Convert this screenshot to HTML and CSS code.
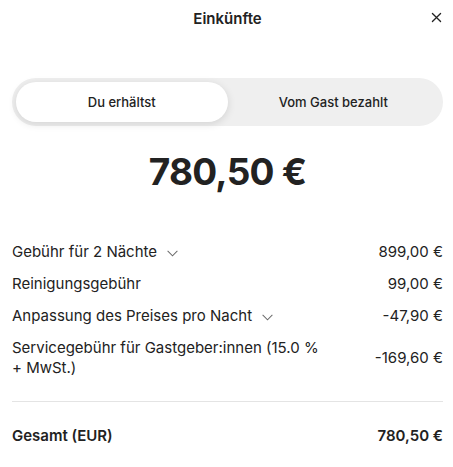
FILE: index.html
```html
<!DOCTYPE html>
<html lang="de">
<head>
    <meta charset="UTF-8">
    <meta name="viewport" content="width=device-width, initial-scale=1.0">
    <title>Einkünfte</title>
    <link rel="stylesheet" href="styles.css">
</head>
<body>
    <div class="sheet">
        <header class="header">
            <h1 class="title">Einkünfte</h1>
            <button class="close" aria-label="Schließen">
                <svg viewBox="0 0 32 32" width="13" height="13">
                    <path d="M6 6l20 20M26 6L6 26" fill="none" stroke="#222" stroke-width="3.2" stroke-linecap="round"/>
                </svg>
            </button>
        </header>

        <div class="toggle">
            <button class="tab active">Du erhältst</button>
            <button class="tab">Vom Gast bezahlt</button>
        </div>

        <div class="amount">780,50 €</div>

        <div class="rows">
            <div class="row">
                <span class="label">Gebühr für 2 Nächte
                    <svg class="chevron" viewBox="0 0 32 32" width="13" height="13">
                        <path d="M28 12L16 24 4 12" fill="none" stroke="#6a6a6a" stroke-width="2.5"/>
                    </svg>
                </span>
                <span class="value">899,00 €</span>
            </div>
            <div class="row">
                <span class="label">Reinigungsgebühr</span>
                <span class="value">99,00 €</span>
            </div>
            <div class="row">
                <span class="label">Anpassung des Preises pro Nacht
                    <svg class="chevron" viewBox="0 0 32 32" width="13" height="13">
                        <path d="M28 12L16 24 4 12" fill="none" stroke="#6a6a6a" stroke-width="2.5"/>
                    </svg>
                </span>
                <span class="value">-47,90 €</span>
            </div>
            <div class="row">
                <span class="label wrap">Servicegebühr für Gastgeber:innen (15.0 % + MwSt.)</span>
                <span class="value">-169,60 €</span>
            </div>
        </div>

        <div class="total">
            <span>Gesamt (EUR)</span>
            <span>780,50 €</span>
        </div>
    </div>
</body>
</html>
```

FILE: styles.css
```css
body {
    margin: 0;
    background: #fff;
    color: #222;
    font-family: Inter, "Noto Sans", sans-serif;
}

.sheet {
    padding: 0 10px 0 12px;
}

.header {
    height: 36px;
    display: flex;
    align-items: center;
    justify-content: center;
    position: relative;
}

.title {
    margin: 0;
    font-size: 15px;
    font-weight: 600;
}

.close {
    position: absolute;
    right: 0;
    top: 11px;
    padding: 0;
    border: none;
    background: none;
    display: flex;
}

.toggle {
    margin-top: 42px;
    display: grid;
    grid-template-columns: 1fr 1fr;
    padding: 4px;
    border-radius: 24px;
    background: #efefef;
}

.tab {
    height: 40px;
    border: none;
    border-radius: 20px;
    background: none;
    font-family: inherit;
    font-size: 13px;
    font-weight: 500;
    color: #222;
}

.tab.active {
    background: #fff;
    box-shadow: 0 2px 8px rgba(0, 0, 0, 0.12);
}

.amount {
    margin-top: 24px;
    text-align: center;
    font-size: 37px;
    font-weight: 700;
    letter-spacing: -0.8px;
    line-height: 44px;
}

.rows {
    margin-top: 42px;
}

.row {
    display: flex;
    justify-content: space-between;
    align-items: center;
    font-size: 15px;
    line-height: 20px;
    padding: 6px 0;
}

.label {
    display: flex;
    align-items: center;
    gap: 9px;
}

.label.wrap {
    display: block;
    max-width: 318px;
}

.chevron {
    margin-top: 1px;
}

.total {
    margin-top: 17px;
    border-top: 1px solid #e4e4e4;
    padding-top: 24px;
    display: flex;
    justify-content: space-between;
    font-size: 15px;
    font-weight: 600;
}
```
